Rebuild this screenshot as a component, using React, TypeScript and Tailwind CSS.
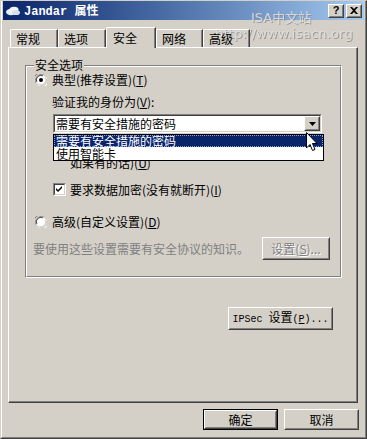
import React from "react";

const CJK = "font-['Noto_Sans_CJK_SC','Noto_Sans',sans-serif]";
const MONO = "font-['Liberation_Mono','Noto_Sans_CJK_SC',monospace]";

function Raised({ className = "", children }: { className?: string; children?: React.ReactNode }) {
  return (
    <div className={`border border-t-white border-l-white border-r-[#404040] border-b-[#404040] bg-[#d4d0c8] ${className}`}>
      <div className="w-full h-full border border-t-[#d4d0c8] border-l-[#d4d0c8] border-r-[#808080] border-b-[#808080] flex items-center justify-center">
        {children}
      </div>
    </div>
  );
}

function Radio({ checked }: { checked: boolean }) {
  return (
    <svg width="12" height="12" viewBox="0 0 12 12" className="shrink-0">
      <path d="M1 8 A5.5 5.5 0 0 1 8 1" stroke="#808080" strokeWidth="1" fill="none" />
      <circle cx="6" cy="6" r="5" fill="#fff" />
      <path d="M0.5 8.5 A5.7 5.7 0 0 1 8.5 0.5" stroke="#808080" strokeWidth="1" fill="none" />
      <path d="M1.8 7.8 A4.5 4.5 0 0 1 7.8 1.8" stroke="#404040" strokeWidth="1" fill="none" />
      <path d="M3.5 11.5 A5.7 5.7 0 0 0 11.5 3.5" stroke="#ffffff" strokeWidth="1" fill="none" />
      <path d="M4.2 10.2 A4.5 4.5 0 0 0 10.2 4.2" stroke="#d4d0c8" strokeWidth="1" fill="none" />
      {checked && <circle cx="6" cy="6" r="2" fill="#000" />}
    </svg>
  );
}

function Check({ checked }: { checked: boolean }) {
  return (
    <div className="w-[13px] h-[13px] shrink-0 border border-t-[#808080] border-l-[#808080] border-r-white border-b-white">
      <div className="w-full h-full border border-t-[#404040] border-l-[#404040] border-r-[#d4d0c8] border-b-[#d4d0c8] bg-white">
        {checked && (
          <svg width="9" height="9" viewBox="0 0 9 9">
            <path d="M1 3 L3 5 L7 1 L7 3 L3 7 L1 5 Z" fill="#000" />
          </svg>
        )}
      </div>
    </div>
  );
}

function U({ children }: { children: React.ReactNode }) {
  return <span className="underline underline-offset-[1px]">{children}</span>;
}

export default function App() {
  return (
    <div className={`relative w-[367px] h-[439px] overflow-hidden bg-[#d4d0c8] border border-t-[#d4d0c8] border-l-[#d4d0c8] border-r-[#404040] border-b-[#404040] text-[12px] text-black ${CJK}`}>
      <div className="w-full h-full border-l border-r border-b border-l-white border-r-[#808080] border-b-[#808080] px-[1px] flex flex-col">
        {/* Title bar */}
        <div className="h-[19px] shrink-0 flex items-center bg-gradient-to-r from-[#0a246a] to-[#a6caf0] pl-[2px] pr-[2px]">
          <svg width="16" height="12" viewBox="0 0 16 12" className="mr-[3px]">
            <ellipse cx="6" cy="7" rx="5" ry="3.2" fill="#e8eef8" />
            <ellipse cx="9" cy="5" rx="4.5" ry="3.2" fill="#f4f6fb" />
            <ellipse cx="11" cy="7.5" rx="4" ry="2.6" fill="#d8e0ee" />
          </svg>
          <span className="text-white font-bold text-[12px] leading-[14px]">
            <span className={`${MONO}`}>Jandar </span>
            <span>属性</span>
          </span>
          <div className="flex-1" />
          <Raised className="w-[16px] h-[14px] mr-[2px]">
            <span className="font-['Liberation_Sans',sans-serif] font-bold text-[11px] leading-none">?</span>
          </Raised>
          <Raised className="w-[16px] h-[14px]">
            <svg width="8" height="7" viewBox="0 0 8 7">
              <path d="M0 0 L2 0 L4 2 L6 0 L8 0 L5 3.5 L8 7 L6 7 L4 5 L2 7 L0 7 L3 3.5 Z" fill="#000" />
            </svg>
          </Raised>
        </div>

        {/* Tabs */}
        <div className="mt-[7px] ml-[7px] h-[20px] flex items-end relative z-10">
          {[
            { t: "常规", w: "w-[48px]" },
            { t: "选项", w: "w-[48px]" },
          ].map((x) => (
            <div key={x.t} className={`${x.w} h-[18px] border-t border-l border-t-white border-l-white border-r border-r-[#404040] shadow-[inset_-1px_0_0_#808080] rounded-tl-[2px] flex items-center pl-[5px] leading-[14px]`}>
              {x.t}
            </div>
          ))}
          <div className="w-[50px] h-[21px] mb-[-1px] bg-[#d4d0c8] border-t border-l border-t-white border-l-white border-r border-r-[#404040] shadow-[inset_-1px_0_0_#808080] rounded-tl-[2px] flex items-center pl-[6px] pb-[1px] leading-[14px]">
            安全
          </div>
          {[
            { t: "网络", w: "w-[47px]" },
            { t: "高级", w: "w-[47px]" },
          ].map((x) => (
            <div key={x.t} className={`${x.w} h-[18px] border-t border-l border-t-white border-l-white border-r border-r-[#404040] shadow-[inset_-1px_0_0_#808080] rounded-tl-[2px] flex items-center pl-[5px] leading-[14px]`}>
              {x.t}
            </div>
          ))}
        </div>

        {/* Panel */}
        <div className="ml-[5px] w-[350px] h-[356px] border-t border-l border-t-white border-l-white border-r border-b border-r-[#404040] border-b-[#404040]">
          <div className="w-full h-full border-r border-b border-r-[#808080] border-b-[#808080] flex flex-col">
            {/* Group box */}
            <div className="relative ml-[16px] mt-[17px] w-[317px] h-[213px] border border-t-[#808080] border-l-[#808080] border-r-white border-b-white">
              <div className="w-full h-full border border-t-white border-l-white border-r-[#808080] border-b-[#808080] flex flex-col">
                {/* Row 1 */}
                <div className="mt-[6px] h-[14px] flex items-center ml-[8px] gap-[5px] leading-[14px]">
                  <Radio checked />
                  <span>典型(推荐设置)(<U>T</U>)</span>
                </div>
                {/* Row 2 */}
                <div className="mt-[8px] h-[14px] flex items-center ml-[25px] leading-[14px]">
                  验证我的身份为(<U>V</U>):
                </div>
                {/* Combo */}
                <div className="mt-[5px] ml-[26px] w-[269px] h-[19px] border border-t-[#808080] border-l-[#808080] border-r-white border-b-white">
                  <div className="w-full h-full border border-t-[#404040] border-l-[#404040] border-r-[#d4d0c8] border-b-[#d4d0c8] bg-white flex items-center">
                    <span className="flex-1 pl-[1px] leading-[14px]">需要有安全措施的密码</span>
                    <Raised className="w-[16px] h-[15px]">
                      <svg width="7" height="4" viewBox="0 0 7 4">
                        <path d="M0 0 L7 0 L3.5 4 Z" fill="#000" />
                      </svg>
                    </Raised>
                  </div>
                </div>
                {/* Hidden checkbox row */}
                <div className="mt-[10px] ml-[26px] h-[26px] flex items-start gap-[4px]">
                  <div className="mt-[1px]"><Check checked /></div>
                  <div className="leading-[13px] pl-[0px]">
                    <div>自动使用我的 Windows 登录名和密码(及域，</div>
                    <div>如果有的话)(<U>U</U>)</div>
                  </div>
                </div>
                {/* Encryption */}
                <div className="mt-[14px] ml-[26px] h-[13px] flex items-center gap-[4px] leading-[14px]">
                  <Check checked />
                  <span>要求数据加密(没有就断开)(<U>I</U>)</span>
                </div>
                {/* Advanced */}
                <div className="mt-[19px] h-[14px] flex items-center ml-[8px] gap-[5px] leading-[14px]">
                  <Radio checked={false} />
                  <span>高级(自定义设置)(<U>D</U>)</span>
                </div>
                {/* Text + settings */}
                <div className="mt-[8px] h-[23px] flex items-center ml-[6px]">
                  <span className="w-[229px] text-[#808080] leading-[14px]">要使用这些设置需要有安全协议的知识。</span>
                  <Raised className="w-[68px] h-[23px]">
                    <span className="text-[#808080] [text-shadow:1px_1px_0_#fff] leading-[14px]">设置(<U>S</U>)...</span>
                  </Raised>
                </div>
              </div>

              <div className="absolute left-[8px] top-[-8px] bg-[#d4d0c8] px-[1px] leading-[14px]">安全选项</div>

              {/* Dropdown list overlay */}
              <div className="absolute left-[27px] top-[68px] w-[271px] h-[27px] border border-black bg-white flex flex-col leading-[12px]">
                <div className="h-[12px] bg-[#0a246a] text-white pl-[2px] outline outline-1 outline-dotted outline-[#8aa0d0] -outline-offset-1 flex items-center">需要有安全措施的密码</div>
                <div className="h-[13px] pl-[2px] flex items-center">使用智能卡</div>
              </div>

              {/* Mouse cursor */}
              <svg className="absolute left-[280px] top-[66px]" width="12" height="20" viewBox="0 0 12 20">
                <path d="M0.5 0.5 L0.5 16 L4 12.5 L6.5 18.5 L9 17.5 L6.5 11.5 L11 11.5 Z" fill="#fff" stroke="#000" strokeWidth="1" strokeLinejoin="miter" />
              </svg>
            </div>

            {/* IPSec */}
            <Raised className="mt-[29px] ml-[219px] w-[105px] h-[23px]">
              <span className="leading-[14px] whitespace-pre">
                <span className={`${MONO} text-[10px]`}>IPSec </span>设置<span className={`${MONO} text-[10px]`}>(<U>P</U>)...</span>
              </span>
            </Raised>
          </div>
        </div>

        {/* Bottom buttons */}
        <div className="mt-[6px] flex">
          <div className="ml-[200px] w-[75px] h-[21px] border border-black">
            <Raised className="w-full h-full">
              <span className="leading-[14px]">确定</span>
            </Raised>
          </div>
          <Raised className="ml-[6px] w-[75px] h-[21px]">
            <span className="leading-[14px]">取消</span>
          </Raised>
        </div>
      </div>

      {/* Watermark */}
      <div className="absolute left-[250px] top-[9px] text-[13px] leading-[15px] text-[#e4e4e4] opacity-80 [text-shadow:1px_1px_0_#8a8a8a] font-['DejaVu_Sans','Noto_Sans_CJK_SC',sans-serif]">
        ISA中文站
      </div>
      <div className="absolute left-[214px] top-[25px] text-[13px] leading-[15px] text-[#e0e0e0] opacity-80 [text-shadow:1px_1px_0_#8a8a8a] font-['DejaVu_Sans',sans-serif] tracking-[0.2px]">
        http://www.isacn.org
      </div>
    </div>
  );
}
